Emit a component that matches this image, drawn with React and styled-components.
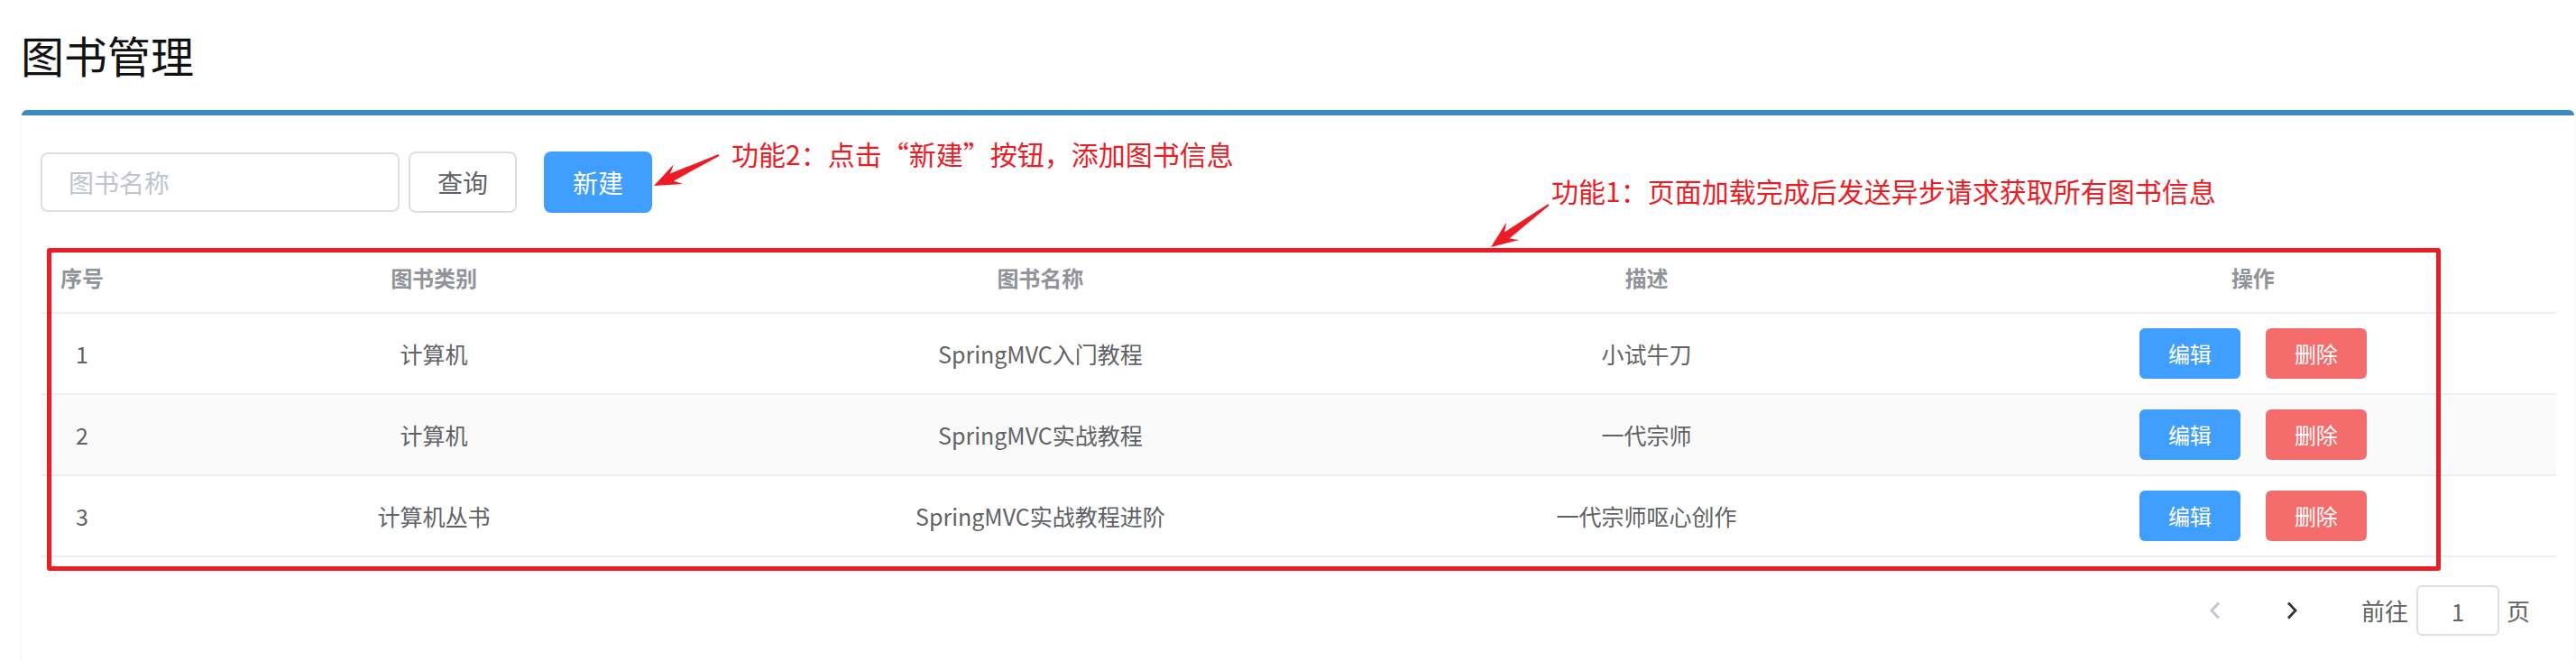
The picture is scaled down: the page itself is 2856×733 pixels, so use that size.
import React from "react";
import styled, { createGlobalStyle } from "styled-components";

const GlobalStyle = createGlobalStyle`
  * { box-sizing: border-box; }
  html, body { margin: 0; padding: 0; background: #fff; overflow: hidden; }
  body { font-family: "Noto Sans CJK SC", "Noto Sans", sans-serif; }
`;

const RED = "#ed1c24";

const Page = styled.div`
  position: relative;
  padding: 36px 2px 0 24px;
`;

const Title = styled.h1`
  margin: 0 0 38px -1px;
  font-size: 48px;
  line-height: 48px;
  font-weight: 400;
  color: #111;
`;

const Box = styled.div`
  background: #fff;
  border-top: 6px solid #3c8dbc;
  border-radius: 6px 6px 0 0;
  box-shadow: 0 0 2px rgba(0, 0, 0, 0.14);
  padding: 40px 20px 28px 21px;
`;

const Toolbar = styled.div`
  display: flex;
  align-items: center;
  height: 68px;
`;

const SearchInput = styled.input`
  width: 398px;
  height: 66px;
  border: 2px solid #dcdfe6;
  border-radius: 8px;
  padding: 0 29px;
  font: inherit;
  font-size: 28px;
  color: #606266;
  outline: none;
  &::placeholder { color: #c0c4cc; }
`;

const Button = styled.button`
  width: ${(p) => p.$w || 120}px;
  height: ${(p) => p.$h || 68}px;
  margin-left: ${(p) => p.$ml || 0}px;
  border-radius: ${(p) => p.$r || 8}px;
  border: ${(p) => (p.$kind === "plain" ? "2px solid #dcdfe6" : "none")};
  background: ${(p) =>
    p.$kind === "primary" ? "#409eff" : p.$kind === "danger" ? "#f56c6c" : "#fff"};
  color: ${(p) => (p.$kind === "plain" ? "#606266" : "#fff")};
  font-family: inherit;
  font-size: ${(p) => p.$fs || 28}px;
  line-height: 1;
  padding: 0;
  display: flex;
  align-items: center;
  justify-content: center;
  cursor: pointer;
`;

const Table = styled.div`
  margin-top: 32px;
`;

const Row = styled.div`
  display: grid;
  grid-template-columns: 100px repeat(4, 1fr);
  height: ${(p) => (p.$head ? 80 : 90)}px;
  border-bottom: 2px solid #ebeef5;
  background: ${(p) => (p.$striped ? "#fafafa" : "#fff")};
`;

const Cell = styled.div`
  display: flex;
  align-items: center;
  justify-content: ${(p) => (p.$left ? "flex-start" : "center")};
  padding-left: ${(p) => p.$pl || 0}px;
  gap: 28px;
  font-size: ${(p) => (p.$head ? 24 : 25)}px;
  font-weight: ${(p) => (p.$head ? 700 : 400)};
  color: ${(p) => (p.$head ? "#909399" : "#606266")};
  white-space: nowrap;
`;

const Pager = styled.div`
  display: flex;
  justify-content: flex-end;
  align-items: center;
  height: 56px;
  margin-top: 31px;
  padding-right: 29px;
  font-size: 26px;
  color: #606266;
`;

const NavBtn = styled.div`
  width: 60px;
  height: 56px;
  display: flex;
  align-items: center;
  justify-content: center;
  margin-left: ${(p) => p.$ml || 0}px;
  color: ${(p) => (p.$disabled ? "#c0c4cc" : "#303133")};
`;

const JumpLabel = styled.span`
  margin-left: ${(p) => p.$ml || 0}px;
  line-height: 1;
`;

const JumpInput = styled.div`
  width: 92px;
  height: 56px;
  margin: 0 8px 0 9px;
  border: 2px solid #dcdfe6;
  border-radius: 6px;
  display: flex;
  align-items: center;
  justify-content: center;
  color: #606266;
`;

const RedFrame = styled.div`
  position: absolute;
  left: 52px;
  top: 275px;
  width: 2654px;
  height: 358px;
  border: 5px solid ${RED};
  border-radius: 3px;
  pointer-events: none;
`;

const Note = styled.div`
  position: absolute;
  left: ${(p) => p.$x}px;
  top: ${(p) => p.$y}px;
  font-size: 30px;
  line-height: 30px;
  color: ${RED};
  white-space: nowrap;
`;

const Overlay = styled.svg`
  position: absolute;
  left: 0;
  top: 0;
  pointer-events: none;
`;

const arrowPoints = (tail, tip) => {
  const dx = tip[0] - tail[0];
  const dy = tip[1] - tail[1];
  const len = Math.hypot(dx, dy);
  const ux = dx / len;
  const uy = dy / len;
  const nx = -uy;
  const ny = ux;
  const headLen = 30;
  const headHalf = 12;
  const neck = 22;
  const shaftHalf = 4.5;
  const tailHalf = 1;
  const pt = (bx, by, along, side) => [bx + ux * along + nx * side, by + uy * along + ny * side];
  const pts = [
    tip,
    pt(tip[0], tip[1], -headLen, headHalf),
    pt(tip[0], tip[1], -neck, shaftHalf),
    pt(tail[0], tail[1], 0, tailHalf),
    pt(tail[0], tail[1], 0, -tailHalf),
    pt(tip[0], tip[1], -neck, -shaftHalf),
    pt(tip[0], tip[1], -headLen, -headHalf),
  ];
  return pts.map((p) => p.map((v) => v.toFixed(1)).join(",")).join(" ");
};

const Chevron = ({ dir }) => (
  <svg width="12" height="20" viewBox="0 0 12 20">
    <polyline
      points={dir === "left" ? "10,1.5 2,10 10,18.5" : "2,1.5 10,10 2,18.5"}
      fill="none"
      stroke="currentColor"
      strokeWidth="2.8"
    />
  </svg>
);

const books = [
  { id: 1, type: "计算机", name: "SpringMVC入门教程", desc: "小试牛刀" },
  { id: 2, type: "计算机", name: "SpringMVC实战教程", desc: "一代宗师" },
  { id: 3, type: "计算机丛书", name: "SpringMVC实战教程进阶", desc: "一代宗师呕心创作" },
];

const App = () => {
  return (
    <Page>
      <GlobalStyle />
      <Title>图书管理</Title>
      <Box>
        <Toolbar>
          <SearchInput placeholder="图书名称" />
          <Button $kind="plain" $ml={10}>查询</Button>
          <Button $kind="primary" $ml={30}>新建</Button>
        </Toolbar>

        <Table>
          <Row $head>
            <Cell $head $left $pl={22}>序号</Cell>
            <Cell $head>图书类别</Cell>
            <Cell $head>图书名称</Cell>
            <Cell $head>描述</Cell>
            <Cell $head>操作</Cell>
          </Row>
          {books.map((b, i) => (
            <Row key={b.id} $striped={i % 2 === 1}>
              <Cell $left $pl={39}>{b.id}</Cell>
              <Cell>{b.type}</Cell>
              <Cell>{b.name}</Cell>
              <Cell>{b.desc}</Cell>
              <Cell>
                <Button $kind="primary" $w={112} $h={56} $r={6} $fs={24}>编辑</Button>
                <Button $kind="danger" $w={112} $h={56} $r={6} $fs={24}>删除</Button>
              </Cell>
            </Row>
          ))}
        </Table>

        <Pager>
          <NavBtn $disabled>
            <Chevron dir="left" />
          </NavBtn>
          <NavBtn $ml={25}>
            <Chevron dir="right" />
          </NavBtn>
          <JumpLabel $ml={47}>前往</JumpLabel>
          <JumpInput>1</JumpInput>
          <JumpLabel>页</JumpLabel>
        </Pager>
      </Box>

      <RedFrame />
      <Overlay width="2856" height="733">
        <polygon points={arrowPoints([797, 172], [725, 206])} fill={RED} />
        <polygon points={arrowPoints([1717, 227], [1653, 274])} fill={RED} />
      </Overlay>
      <Note $x={811} $y={155}>功能2：点击“新建”按钮，添加图书信息</Note>
      <Note $x={1720} $y={196}>功能1：页面加载完成后发送异步请求获取所有图书信息</Note>
    </Page>
  );
};

export default App;
